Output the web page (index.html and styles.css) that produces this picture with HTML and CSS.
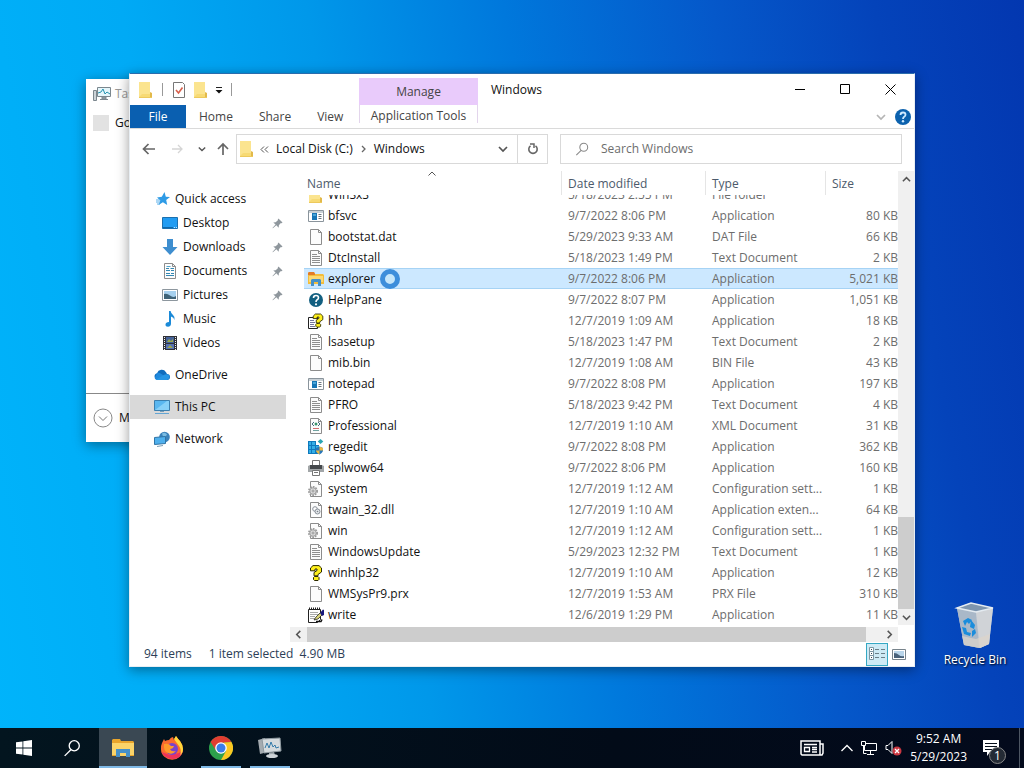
FILE: index.html
```html
<!DOCTYPE html>
<html lang="en">
<head>
    <meta charset="UTF-8">
    <meta name="viewport" content="width=device-width, initial-scale=1.0">
    <title>Windows</title>
    <link rel="stylesheet" href="styles.css">
</head>
<body>
    <!-- icon sprite -->
    <svg class="sprite" aria-hidden="true">
        <symbol id="i-folder" viewBox="0 0 16 16">
            <path d="M1 0h11v11h2v5H1z" fill="#f7da74"/>
            <path d="M1 0h11v12H4l-3 3z" fill="#fbe48f"/>
            <path d="M12 10l2 1v5h-2z" fill="#e2b94a"/>
            <path d="M1 15h13v1H1z" fill="#edc95c"/>
        </symbol>
        <symbol id="i-props" viewBox="0 0 16 16">
            <path d="M2.500.5h9l2 2v13h-11z" fill="#fff" stroke="#777"/>
            <path d="M5 8l2.500 3L11.500 5.500" fill="none" stroke="#d8604c" stroke-width="1.600"/>
        </symbol>
        <symbol id="i-page" viewBox="0 0 16 16">
            <path d="M2.500.5h8l3 3v12h-11z" fill="#fcfcfc" stroke="#8c8c8c"/>
            <path d="M10.500.5v3h3" fill="none" stroke="#8c8c8c"/>
        </symbol>
        <symbol id="i-text" viewBox="0 0 16 16">
            <use href="#i-page"/>
            <path d="M4 4.500h5M4 6.500h8M4 8.500h8M4 10.500h8M4 12.500h8" stroke="#8f8f8f"/>
        </symbol>
        <symbol id="i-app" viewBox="0 0 16 16">
            <path d="M.5 2.500h15v11H.5z" fill="#fff" stroke="#8a949c"/>
            <path d="M1 3h14v2H1z" fill="#c9d1d6"/>
            <path d="M4 5h5v7H4z" fill="#1775b5"/>
            <path d="M5 6h3v2H5z" fill="#4aa5d8"/>
            <path d="M10.500 6.500h3M10.500 8.500h3M10.500 10.500h3" stroke="#6b7780"/>
        </symbol>
        <symbol id="i-explorer" viewBox="0 0 16 16">
            <path d="M0 2l1-1h5l1 2h8l1 1v9H0z" fill="#f3bd3c"/>
            <path d="M0 2l1-1h5l1 2v1H0z" fill="#e27b28"/>
            <path d="M1 5h14v6H1z" fill="#fbd974"/>
            <path d="M3 15V9l1-1h8l1 1v6h-3v-4H6v4z" fill="#4390c8"/>
        </symbol>
        <symbol id="i-help" viewBox="0 0 16 16">
            <circle cx="8" cy="8" r="7" fill="#125f80"/>
            <path d="M5.500 6q0-2.500 2.500-2.500t2.500 2.200q0 1.300-1.300 2Q8 8.500 8 10" fill="none" stroke="#fff" stroke-width="1.600"/>
            <circle cx="8" cy="12.300" r="1.100" fill="#fff"/>
        </symbol>
        <symbol id="i-question" viewBox="0 0 16 16">
            <path d="M2.500 5.800V3L5 .6h6L13.500 3v4L10 9.500v1.300H6V7.500L9 5.500V4H7v1.800z" fill="#fff01c" stroke="#2b2900"/>
            <path d="M6.500 11.500h3.500l1 1v2l-1 1H6.500l-1-1v-2z" fill="#fff01c" stroke="#2b2900"/>
        </symbol>
        <symbol id="i-hh" viewBox="0 0 16 16">
            <path d="M.5 4.500h9v11h-9z" fill="#fff" stroke="#222"/>
            <path d="M2 7.500h4M2 9.500h5M2 11.500h4M2 13.500h5" stroke="#75759a"/>
            <use href="#i-question" x="3" y="0" width="14" height="15"/>
        </symbol>
        <symbol id="i-xml" viewBox="0 0 16 16">
            <use href="#i-page"/>
            <path d="M6 4L4 6l2 2M10 4l2 2-2 2" fill="none" stroke="#426b7c"/>
            <circle cx="8" cy="6" r="1.500" fill="#3a966f"/>
            <path d="M5 10.500h6" stroke="#d17070"/>
            <path d="M5 12.500h6" stroke="#71a3a1"/>
        </symbol>
        <symbol id="i-regedit" viewBox="0 0 16 16">
            <path d="M0 2h11v13H0z" fill="#0e79bd"/>
            <path d="M1 3h2v3H1zM4 3h3v3H4zM1 7h2v3H1zM4 7h3v3H4zM8 7h3v3H8zM1 11h2v3H1zM4 11h3v3H4z" fill="#33aee6"/>
            <path d="M8 2h3v4H8z" fill="#fff"/>
            <path d="M12.500 0l2.800 2.500-2.800 2.500-2.800-2.500z" fill="#2aa5b5"/>
            <path d="M8 9l3.500-1.500L15 9v3q-1 2.500-3.500 3.500Q9 14.500 8 12z" fill="#2876b8"/>
            <path d="M11.500 7.500L15 9v2.500h-3.500zM8 11.500h3.500v4Q9 14.500 8 12z" fill="#e8b843"/>
        </symbol>
        <symbol id="i-printer" viewBox="0 0 16 16">
            <path d="M4.500.5h7v5h-7z" fill="#fff" stroke="#777"/>
            <path d="M0 6l2-1h12l2 1v6H0z" fill="#a2a6a8"/>
            <path d="M2 5h12v4H2z" fill="#45494c"/>
            <path d="M4.500 10.500h7v5h-7z" fill="#fff" stroke="#777"/>
            <path d="M6 12.500h4" stroke="#777"/>
        </symbol>
        <symbol id="i-gear" viewBox="0 0 16 16">
            <use href="#i-page"/>
            <circle cx="5" cy="10" r="4" fill="#eee" stroke="#999" stroke-width="2" stroke-dasharray="1.600 1"/>
            <circle cx="5" cy="10" r="3.200" fill="#dcdcdc" stroke="#a2a2a2"/>
            <circle cx="5" cy="10" r="1" fill="#fff" stroke="#929292"/>
        </symbol>
        <symbol id="i-dll" viewBox="0 0 16 16">
            <use href="#i-page"/>
            <circle cx="7" cy="7" r="2.300" fill="#fff" stroke="#899099"/>
            <circle cx="9.500" cy="9.500" r="2.500" fill="#e4e7ea" stroke="#899099"/>
            <circle cx="9.500" cy="9.500" r=".8" fill="#7c848c"/>
        </symbol>
        <symbol id="i-write" viewBox="0 0 16 16">
            <path d="M.5 2.500h12v10l-3 3h-9z" fill="#fff" stroke="#222"/>
            <path d="M1 1.500h12" stroke="#222" stroke-width="2" stroke-dasharray="1 1"/>
            <path d="M2 5.500h8M2 7.500h8M2 9.500h5M2 11.500h5" stroke="#aaa"/>
            <path d="M6 13l2-3 5-5 2 2-5 5z" fill="#d9d37a" stroke="#111" stroke-width=".7"/>
            <path d="M12 6l3-3.500 1 .5v5l-2 1z" fill="#19197c"/>
            <path d="M8 14.500h5l1-2" fill="none" stroke="#111" stroke-width="1.500"/>
        </symbol>
        <symbol id="i-star" viewBox="0 0 16 16">
            <path d="M10.500 1l1.300 4.700L16 6l-3.800 3 1 5-4.300-2.800L4.500 14l1.800-4.600L3 6.500l4.800-.7z" fill="#2e9be6"/>
            <path d="M2 9h4M2 11h4M3 13h3" stroke="#5bb0ea"/>
        </symbol>
        <symbol id="i-desktop" viewBox="0 0 16 16">
            <path d="M.5 2.500h15v11H.5z" fill="#219cf2" stroke="#1b70af"/>
            <path d="M1 12.500h10" stroke="#0f67a8"/>
            <path d="M12 12.500h3" stroke="#bfe4ff" stroke-dasharray="1 1"/>
        </symbol>
        <symbol id="i-down" viewBox="0 0 16 16">
            <path d="M5 0h6v8h4.500L8 16 .5 8H5z" fill="#3e8ecf"/>
        </symbol>
        <symbol id="i-docs" viewBox="0 0 16 16">
            <use href="#i-page"/>
            <path d="M4 5.500h3M8.500 5.500H12M4 7.500h4M9 7.500h3M4 10.500h4M9 10.500h3M4 12.500h8" stroke="#3387b2"/>
            <path d="M4.500 3.500h4" stroke="#52a3c9"/>
        </symbol>
        <symbol id="i-pics" viewBox="0 0 16 16">
            <path d="M.5 2.500h15v11H.5z" fill="#fff" stroke="#8d979e"/>
            <path d="M2 4h12v8H2z" fill="#a6d0ee"/>
            <path d="M2 7q3-1 6 1.500t6 .5v3H2z" fill="#3f6378"/>
        </symbol>
        <symbol id="i-music" viewBox="0 0 16 16">
            <path d="M7 0h1.600q.4 2.500 2.400 4t1.500 5q-.7-3-3.500-3.500V13q-.4 2.700-3 2.700T3.500 13.500 7 11z" fill="#1b8ad8"/>
        </symbol>
        <symbol id="i-video" viewBox="0 0 16 16">
            <path d="M1 1h14v14H1z" fill="#303238"/>
            <path d="M2.500 2v13M13.500 2v13" stroke="#f2f2f2" stroke-dasharray="1 1"/>
            <path d="M4 2h8v6H4z" fill="#456298"/>
            <path d="M4 9h8v5H4z" fill="#5571b4"/>
            <path d="M5 7l2-3 2 2 2-2v3zM5 13l3-3 3 3z" fill="#9aa84c"/>
        </symbol>
        <symbol id="i-cloud" viewBox="0 0 16 16">
            <path d="M3.500 13A3.500 3.500 0 0 1 3 6.200a5 5 0 0 1 9-1L13 7a3 3 0 0 1 0 6z" fill="#0f6cbd"/>
            <path d="M3 6.200q2-1 4 .5L13 10.500V13H3.500Q1 12.500.6 11z" fill="#1f88dc"/>
            <path d="M2 12.500L9 8.500q3-2 5-1a3 3 0 0 1-1 5.500H3.500z" fill="#2595e4"/>
        </symbol>
        <symbol id="i-pc" viewBox="0 0 16 16">
            <path d="M.5 1.500h15v10H.5z" fill="#5ab7f0" stroke="#3c7fae"/>
            <path d="M1 11L13 2h2v9z" fill="#87d0f8"/>
            <path d="M6 12h4v1H6z" fill="#779db6"/>
            <path d="M1 14.500h14" stroke="#64a5d3"/>
        </symbol>
        <symbol id="i-net" viewBox="0 0 16 16">
            <circle cx="10.500" cy="6" r="5.300" fill="#3b82ba"/>
            <path d="M8 2.500q3-2 5 1l-2 3-2-1z" fill="#7bbce2"/>
            <path d="M.5 6.500l11-1v7l-11 1z" fill="#4fb0ed" stroke="#2f74a6"/>
            <path d="M3 15.500l6-1" stroke="#7b9db2"/>
        </symbol>
        <symbol id="i-pin" viewBox="0 0 12 12">
            <path d="M7 .5L11.500 5l-1.200.6-1 .1L7.500 8l-.2 2.500L4.700 8 1 11.300l-.5-.5L3.900 7.200 1.400 4.800l2.500-.2 2.300-1.800.1-1z" fill="#8f979d"/>
        </symbol>
        <symbol id="i-taskmgr" viewBox="0 0 18 16">
            <path d="M.5 4.500h3v10h-3z" fill="#ccd3d7" stroke="#7b878e"/>
            <path d="M4.500 1.500h13v9h-13z" fill="#e5f6fb" stroke="#7b878e"/>
            <path d="M5 7l3-1 2-3 2 5 2-2 3 2" fill="none" stroke="#2593b0"/>
            <path d="M9 11h4v2H9zM7 13.500h8" stroke="#7b878e" fill="#9aa5ab"/>
        </symbol>
        <symbol id="i-chev" viewBox="0 0 10 10">
            <path d="M1 3l4 4 4-4" fill="none" stroke="currentColor" stroke-width="1.700"/>
        </symbol>
        <symbol id="i-search" viewBox="0 0 16 16">
            <circle cx="10" cy="6" r="4.500" fill="none" stroke="currentColor" stroke-width="1.200"/>
            <path d="M7 9.500L1.500 15" stroke="currentColor" stroke-width="1.200"/>
        </symbol>
    </svg>

    <div class="desktop">
        <div class="recycle">
            <svg width="44" height="48" viewBox="0 0 44 48" aria-hidden="true">
                <path d="M4 8l7 37 16 3 9-4 4-36-23-5z" fill="#bac5d0"/>
                <path d="M4 8l19 4 3 36-15-3z" fill="#a9b8c8"/>
                <path d="M23 12l17-4-4 36-9 4z" fill="#d0d3d7"/>
                <path d="M4 8l14-5 22 5-17 4z" fill="#7d95ae" stroke="#e4ebf1" stroke-width="1.500"/>
                <path d="M9 36l14 3 14-5-1 10-9 4-16-3z" fill="#ddd4cb" opacity=".7"/>
                <path d="M10 21l5-3 4 2-3 4-2-2-2 4zM18 20l4 5-1 4-4-2zM9 27l4 1 1 4 4 1-1 3-6-2zM19 31l3-2 1 4-4 4z" fill="#1a8ddc"/>
            </svg>
            <span>Recycle Bin</span>
        </div>

        <section class="window taskmgr">
            <div class="taskmgr-title">
                <svg width="18" height="16"><use href="#i-taskmgr"/></svg>
                <span>Tas</span>
            </div>
            <div class="taskmgr-row"><span class="app-blank"></span>Go</div>
            <div class="taskmgr-foot">
                <svg width="20" height="20" viewBox="0 0 20 20"><circle cx="10" cy="10" r="9" fill="none" stroke="#888"/><path d="M6 8.500l4 4 4-4" fill="none" stroke="#777"/></svg>
                M
            </div>
        </section>

        <main class="window explorer">
            <header class="ribbon">
                <div class="ribbon-left">
                    <div class="quickbar">
                        <svg width="16" height="16"><use href="#i-folder"/></svg>
                        <span class="sep"></span>
                        <button aria-label="Properties"><svg width="16" height="16"><use href="#i-props"/></svg></button>
                        <button aria-label="New folder"><svg width="16" height="16"><use href="#i-folder"/></svg></button>
                        <button aria-label="Customize toolbar"><svg width="8" height="8" viewBox="0 0 8 8"><path d="M1 1.500h6" stroke="#222"/><path d="M.5 4h7L4 7.500z" fill="#111"/></svg></button>
                        <span class="sep"></span>
                    </div>
                    <div class="tabs">
                        <button class="file-tab">File</button>
                        <button>Home</button>
                        <button>Share</button>
                        <button>View</button>
                    </div>
                </div>
                <div class="ribbon-tools">
                    <div class="manage">Manage</div>
                    <button class="tools-tab">Application Tools</button>
                </div>
                <div class="ribbon-right">
                    <div class="caption">
                        <h1>Windows</h1>
                        <button aria-label="Minimize"><svg width="11" height="11" viewBox="0 0 11 11"><path d="M0 5.500h10" stroke="#000"/></svg></button>
                        <button aria-label="Maximize"><svg width="11" height="11" viewBox="0 0 11 11"><path d="M.5.5h9v9h-9z" fill="none" stroke="#000"/></svg></button>
                        <button aria-label="Close"><svg width="11" height="11" viewBox="0 0 11 11"><path d="M.5.5l10 10M10.500.5l-10 10" stroke="#000"/></svg></button>
                    </div>
                    <div class="help-row">
                        <button class="pale" aria-label="Expand the ribbon"><svg width="10" height="10"><use href="#i-chev"/></svg></button>
                        <button aria-label="Help"><svg width="16" height="16" viewBox="0 0 16 16"><circle cx="8" cy="8" r="8" fill="#0c62ae"/><path d="M5.500 6q0-2.500 2.500-2.500t2.500 2.200q0 1.300-1.300 2Q8 8.500 8 10" fill="none" stroke="#cfeaff" stroke-width="1.800"/><circle cx="8" cy="12.300" r="1.200" fill="#cfeaff"/></svg></button>
                    </div>
                </div>
            </header>

            <div class="navbar">
                <div class="history">
                    <button aria-label="Back"><svg width="14" height="14" viewBox="0 0 14 14"><path d="M13 7H2M6.500 2L1.500 7l5 5" fill="none" stroke="#666" stroke-width="1.700"/></svg></button>
                    <button aria-label="Forward"><svg width="14" height="14" viewBox="0 0 14 14"><path d="M2 7h10M8 3l4 4-4 4" fill="none" stroke="#d5d5d5" stroke-width="1.300"/></svg></button>
                    <button aria-label="Recent"><svg width="8" height="8"><use href="#i-chev"/></svg></button>
                    <button aria-label="Up"><svg width="14" height="14" viewBox="0 0 14 14"><path d="M7 13V2M2 7l5-5 5 5" fill="none" stroke="#666" stroke-width="1.700"/></svg></button>
                </div>
                <nav class="address" aria-label="Address">
                    <svg width="16" height="16"><use href="#i-folder"/></svg>
                    <svg class="crumb-sep" width="9" height="7" viewBox="0 0 9 7"><path d="M4 .5l-3 3 3 3M8 .5l-3 3 3 3" fill="none" stroke="#555"/></svg>
                    <a href="#">Local Disk (C:)</a>
                    <svg class="crumb-sep" width="5" height="8" viewBox="0 0 5 8"><path d="M1 1l3 3-3 3" fill="none" stroke="#666" stroke-width="1.300"/></svg>
                    <a href="#">Windows</a>
                    <button class="drop" aria-label="Previous locations"><svg width="10" height="10"><use href="#i-chev"/></svg></button>
                    <button class="refresh" aria-label="Refresh"><svg width="12" height="12" viewBox="0 0 12 12"><path d="M3.500 2.800a4.200 4.200 0 1 0 5 0" fill="none" stroke="#666" stroke-width="1.600"/><path d="M3 1h4v4" fill="none" stroke="#666" stroke-width="1.500"/></svg></button>
                </nav>
                <div class="search">
                    <label for="search" aria-label="Search Windows"><svg width="14" height="14"><use href="#i-search"/></svg></label>
                    <input type="text" id="search" placeholder="Search Windows">
                </div>
            </div>

            <div class="content">
                <nav class="sidebar">
                    <a class="top" href="#"><svg width="16" height="16"><use href="#i-star"/></svg>Quick access</a>
                    <a class="sub" href="#"><svg width="16" height="16"><use href="#i-desktop"/></svg>Desktop<svg class="pin" width="11" height="11"><use href="#i-pin"/></svg></a>
                    <a class="sub" href="#"><svg width="16" height="16"><use href="#i-down"/></svg>Downloads<svg class="pin" width="11" height="11"><use href="#i-pin"/></svg></a>
                    <a class="sub" href="#"><svg width="16" height="16"><use href="#i-docs"/></svg>Documents<svg class="pin" width="11" height="11"><use href="#i-pin"/></svg></a>
                    <a class="sub" href="#"><svg width="16" height="16"><use href="#i-pics"/></svg>Pictures<svg class="pin" width="11" height="11"><use href="#i-pin"/></svg></a>
                    <a class="sub" href="#"><svg width="16" height="16"><use href="#i-music"/></svg>Music</a>
                    <a class="sub" href="#"><svg width="16" height="16"><use href="#i-video"/></svg>Videos</a>
                    <a class="group" href="#"><svg width="16" height="16"><use href="#i-cloud"/></svg>OneDrive</a>
                    <a class="group current" href="#"><svg width="16" height="16"><use href="#i-pc"/></svg>This PC</a>
                    <a class="group" href="#"><svg width="16" height="16"><use href="#i-net"/></svg>Network</a>
                </nav>

                <div class="files">
                    <div class="file-list" id="file-list">
                        <table>
                            <thead>
                                <tr>
                                    <th class="name">Name<svg class="sort" width="8" height="5" viewBox="0 0 8 5"><path d="M.5 4.500L4 1l3.500 3.500" fill="none" stroke="#555"/></svg></th>
                                    <th class="date">Date modified</th>
                                    <th class="type">Type</th>
                                    <th>Size</th>
                                </tr>
                            </thead>
                            <tbody>
                                <tr><td><svg width="16" height="16"><use href="#i-folder"/></svg>WinSxS</td><td>5/18/2023 2:55 PM</td><td>File folder</td><td></td></tr>
                                <tr><td><svg width="16" height="16"><use href="#i-app"/></svg>bfsvc</td><td>9/7/2022 8:06 PM</td><td>Application</td><td>80 KB</td></tr>
                                <tr><td><svg width="16" height="16"><use href="#i-page"/></svg>bootstat.dat</td><td>5/29/2023 9:33 AM</td><td>DAT File</td><td>66 KB</td></tr>
                                <tr><td><svg width="16" height="16"><use href="#i-text"/></svg>DtcInstall</td><td>5/18/2023 1:49 PM</td><td>Text Document</td><td>2 KB</td></tr>
                                <tr class="selected"><td><svg width="16" height="16"><use href="#i-explorer"/></svg>explorer<svg class="busy" width="22" height="21" viewBox="0 0 22 21"><circle cx="11" cy="11" r="7.500" fill="#c5e6fa" stroke="#3d8edb" stroke-width="5"/></svg></td><td>9/7/2022 8:06 PM</td><td>Application</td><td>5,021 KB</td></tr>
                                <tr><td><svg width="16" height="16"><use href="#i-help"/></svg>HelpPane</td><td>9/7/2022 8:07 PM</td><td>Application</td><td>1,051 KB</td></tr>
                                <tr><td><svg width="16" height="16"><use href="#i-hh"/></svg>hh</td><td>12/7/2019 1:09 AM</td><td>Application</td><td>18 KB</td></tr>
                                <tr><td><svg width="16" height="16"><use href="#i-text"/></svg>lsasetup</td><td>5/18/2023 1:47 PM</td><td>Text Document</td><td>2 KB</td></tr>
                                <tr><td><svg width="16" height="16"><use href="#i-page"/></svg>mib.bin</td><td>12/7/2019 1:08 AM</td><td>BIN File</td><td>43 KB</td></tr>
                                <tr><td><svg width="16" height="16"><use href="#i-app"/></svg>notepad</td><td>9/7/2022 8:08 PM</td><td>Application</td><td>197 KB</td></tr>
                                <tr><td><svg width="16" height="16"><use href="#i-text"/></svg>PFRO</td><td>5/18/2023 9:42 PM</td><td>Text Document</td><td>4 KB</td></tr>
                                <tr><td><svg width="16" height="16"><use href="#i-xml"/></svg>Professional</td><td>12/7/2019 1:10 AM</td><td>XML Document</td><td>31 KB</td></tr>
                                <tr><td><svg width="16" height="16"><use href="#i-regedit"/></svg>regedit</td><td>9/7/2022 8:08 PM</td><td>Application</td><td>362 KB</td></tr>
                                <tr><td><svg width="16" height="16"><use href="#i-printer"/></svg>splwow64</td><td>9/7/2022 8:06 PM</td><td>Application</td><td>160 KB</td></tr>
                                <tr><td><svg width="16" height="16"><use href="#i-gear"/></svg>system</td><td>12/7/2019 1:12 AM</td><td>Configuration sett...</td><td>1 KB</td></tr>
                                <tr><td><svg width="16" height="16"><use href="#i-dll"/></svg>twain_32.dll</td><td>12/7/2019 1:10 AM</td><td>Application exten...</td><td>64 KB</td></tr>
                                <tr><td><svg width="16" height="16"><use href="#i-gear"/></svg>win</td><td>12/7/2019 1:12 AM</td><td>Configuration sett...</td><td>1 KB</td></tr>
                                <tr><td><svg width="16" height="16"><use href="#i-text"/></svg>WindowsUpdate</td><td>5/29/2023 12:32 PM</td><td>Text Document</td><td>1 KB</td></tr>
                                <tr><td><svg width="16" height="16"><use href="#i-question"/></svg>winhlp32</td><td>12/7/2019 1:10 AM</td><td>Application</td><td>12 KB</td></tr>
                                <tr><td><svg width="16" height="16"><use href="#i-page"/></svg>WMSysPr9.prx</td><td>12/7/2019 1:53 AM</td><td>PRX File</td><td>310 KB</td></tr>
                                <tr><td><svg width="16" height="16"><use href="#i-write"/></svg>write</td><td>12/6/2019 1:29 PM</td><td>Application</td><td>11 KB</td></tr>
                            </tbody>
                        </table>
                    </div>
                    <div class="vscroll">
                        <button class="up" aria-label="Scroll up"><svg width="9" height="9"><use href="#i-chev"/></svg></button>
                        <div class="vthumb"></div>
                        <button aria-label="Scroll down"><svg width="9" height="9"><use href="#i-chev"/></svg></button>
                    </div>
                    <div class="hscroll">
                        <button class="left" aria-label="Scroll left"><svg width="9" height="9"><use href="#i-chev"/></svg></button>
                        <div class="hthumb"></div>
                        <button class="right" aria-label="Scroll right"><svg width="9" height="9"><use href="#i-chev"/></svg></button>
                    </div>
                </div>
            </div>

            <footer class="statusbar">
                <span class="count">94 items</span>
                <span>1 item selected&nbsp; 4.90 MB</span>
                <button class="view active" aria-label="Details"><svg width="16" height="14" viewBox="0 0 16 14"><path d="M.5.5h4v4h-4zM.5 4.500h4v4h-4zM.5 8.500h4v4h-4z" fill="#fff" stroke="#7c97a3"/><path d="M2 2.500h1M2 6.500h1M2 10.500h1" stroke="#345"/><path d="M6 2.500h4M12 2.500h4M6 6.500h4M12 6.500h4M6 10.500h4M12 10.500h4" stroke="#6b7f88"/></svg></button>
                <button class="view" aria-label="Large icons"><svg width="14" height="11" viewBox="0 0 14 11"><path d="M.5.5h13v10H.5z" fill="#fff" stroke="#77838b"/><path d="M2 2h10v7H2z" fill="#b9d5ea"/><path d="M2 4q3 0 5 2t5 1v2H2z" fill="#49627a"/></svg></button>
            </footer>
        </main>
    </div>

    <footer class="taskbar">
        <button class="task" aria-label="Start"><svg width="16" height="16" viewBox="0 0 16 16"><path d="M0 2.300l6.500-.9v6.100H0zM7.300 1.300L16 0v7.500H7.300zM0 8.400h6.500v6.200L0 13.700zM7.300 8.400H16V16l-8.700-1.200z" fill="#fff"/></svg></button>
        <button class="task" aria-label="Search"><svg class="white" width="18" height="18"><use href="#i-search"/></svg></button>
        <div class="apps">
            <button class="task open focused" aria-label="File Explorer">
                <svg width="22" height="20" viewBox="0 0 22 20"><path d="M0 2l1-1h7l1 2h12l1 1v13H0z" fill="#e9a52c"/><path d="M0 5h22v13H0z" fill="#fbd469"/><path d="M4 19v-8h14v8h-4v-4H8v4z" fill="#4590c9"/><path d="M0 17h4v1H0zM18 17h4v1h-4z" fill="#e9a52c"/></svg>
            </button>
            <button class="task" aria-label="Firefox">
                <svg width="24" height="24" viewBox="0 0 24 24"><path d="M2 7l2-4 1 2q2-1 4-1 2-3 4-3l1 3 2-4q2 3 4 5 3 4 3 8a11 10.500 0 0 1-22 .5Q.5 10 2 7z" fill="#fb6b2e"/><path d="M1.500 16q4 7.500 12 7T23 14l-4 3-9 2z" fill="#ee335b"/><path d="M14 3l2-3q2 3 4 5 3 4 3 8t-3 6q2-5-1-9t-5-7z" fill="#ffd83a"/><circle cx="12" cy="13" r="6" fill="#7a43cc"/><path d="M4 8q5-1 7 2h3q-1 3-4 3 1 3 6 2-3 4-8 2T4 8z" fill="#ff9a2a"/></svg>
            </button>
            <button class="task open" aria-label="Google Chrome">
                <svg width="24" height="24" viewBox="0 0 24 24"><circle cx="12" cy="12" r="12" fill="#2da04c"/><path d="M1.600 6A12 12 0 0 1 22.400 6L12 7l-5 7.500z" fill="#e13d31"/><path d="M22.400 6A12 12 0 0 1 12 24l5-9-2-8.500z" fill="#fbc722"/><circle cx="12" cy="12" r="5.800" fill="#fff"/><circle cx="12" cy="12" r="4.500" fill="#3b7de9"/></svg>
            </button>
            <button class="task open" aria-label="Task Manager">
                <svg width="24" height="22" viewBox="0 0 24 22"><path d="M0 3l7-2 3 14-8 2z" fill="#a4abb0"/><path d="M4 2l18-1 1 13-17 2z" fill="#d5dbde" stroke="#8e999f"/><path d="M7 11l2-5 2 5 2-6 2 5 2-2 1 3 3-1" fill="none" stroke="#347baa"/><path d="M11 16l5-1 1 3-6 1z" fill="#9ea7ac"/><ellipse cx="14" cy="19" rx="6" ry="2" fill="#ced4d8"/></svg>
            </button>
        </div>
        <div class="tray">
            <svg class="news" width="24" height="16" viewBox="0 0 24 16"><path d="M1 1h19v14H2l-1-1zM20 4h3v9l-1 2h-2" fill="none" stroke="#fff" stroke-width="1.500"/><path d="M4 4.500h13M12 7.500h5M12 9.500h5M12 12h5" stroke="#fff" stroke-width="1.300"/><path d="M4.500 7.500h5v4h-5z" fill="none" stroke="#fff" stroke-width="1.300"/></svg>
            <svg width="12" height="8" viewBox="0 0 12 8"><path d="M.5 7L6 1.500 11.500 7" fill="none" stroke="#fff" stroke-width="1.300"/></svg>
            <svg width="16" height="14" viewBox="0 0 16 14"><path d="M5 2.500h10.500v7H3.500V5M9.500 10v3M6 13.500h7M.5.5h4v4h-4zM2.500 5v7.500h3" fill="none" stroke="#fff"/></svg>
            <svg width="17" height="16" viewBox="0 0 17 16"><path d="M1 5.500h2l4-4v12l-4-4H1z" fill="none" stroke="#fff"/><circle cx="12" cy="11" r="4.500" fill="#cb3741"/><path d="M10 9l4 4M14 9l-4 4" stroke="#fff" stroke-width="1.300"/></svg>
            <div class="clock"><span>9:52 AM</span><span>5/29/2023</span></div>
            <div class="notify">
                <svg width="16" height="16" viewBox="0 0 16 16"><path d="M0 0h16v12H7l-3 4v-4H0z" fill="#fff"/><path d="M2 3.500h12M2 6.500h12M2 9.500h7" stroke="#07101c"/></svg>
                <span class="badge">1</span>
            </div>
        </div>
    </footer>

    <script>
        // the list opens at its last row
        const fileList = document.getElementById('file-list');
        fileList.scrollTop = fileList.scrollHeight;
    </script>
</body>
</html>
```
FILE: styles.css
```css
* {
    box-sizing: border-box;
}
body {
    margin: 0;
    height: 100vh;
    display: flex;
    flex-direction: column;
    overflow: hidden;
    font-family: "Open Sans", "Noto Sans", sans-serif;
    font-size: 12px;
    line-height: 16px;
    color: #111;
    background: linear-gradient(80deg, #00b4fb 0%, #00aaf5 22%, #0098ea 38%, #0078dc 55%, #0558ca 73%, #0443ba 87%, #0337b0 100%);
}
button {
    display: flex;
    align-items: center;
    justify-content: center;
    padding: 0;
    border: none;
    background: none;
    font: inherit;
    color: #555;
}
a {
    color: inherit;
    text-decoration: none;
}
svg {
    flex: none;
}
.sprite {
    position: absolute;
    width: 0;
    height: 0;
}
.desktop {
    flex: 1;
    position: relative;
}
.window {
    position: absolute;
    background: #fff;
    display: flex;
    flex-direction: column;
    box-shadow: 0 3px 12px rgba(0, 0, 0, 0.4);
}

/* recycle bin */
.recycle {
    position: absolute;
    right: 12px;
    bottom: 60px;
    width: 74px;
    display: flex;
    flex-direction: column;
    align-items: center;
    gap: 4px;
    color: #fff;
    white-space: nowrap;
    text-shadow: 1px 1px 2px #000;
}

/* task manager */
.taskmgr {
    left: 86px;
    top: 79px;
    bottom: 286px;
    width: 40%;
    overflow: hidden;
}
.taskmgr-title {
    height: 30px;
    padding-left: 7px;
    display: flex;
    align-items: center;
    gap: 4px;
    color: #999;
}
.taskmgr-row {
    flex: 1;
    padding: 6px 7px;
    display: flex;
    align-items: flex-start;
    gap: 6px;
}
.app-blank {
    width: 16px;
    height: 16px;
    background: #e2e2e2;
}
.taskmgr-foot {
    height: 49px;
    padding-left: 7px;
    display: flex;
    align-items: center;
    gap: 6px;
    border-top: 1px solid #888;
}

/* explorer */
.explorer {
    left: 129px;
    right: 109px;
    top: 73px;
    bottom: 61px;
    border: 1px solid #e8eef3;
    border-top-color: #2a6cad;
}
.ribbon {
    display: flex;
    height: 55px;
    border-bottom: 1px solid #dadada;
    color: #444;
}
.ribbon-left {
    width: 229px;
}
.quickbar {
    height: 31px;
    padding-left: 8px;
    display: flex;
    align-items: center;
    gap: 6px;
}
.sep {
    width: 1px;
    height: 13px;
    margin: 0 2px;
    background: #999;
}
.tabs {
    display: flex;
    height: 23px;
}
.tabs button {
    padding: 0 13px;
}
.tabs .file-tab {
    flex: none;
    width: 56px;
    background: #0a5fb0;
    color: #fff;
}
.ribbon-tools {
    width: 119px;
    padding-top: 4px;
}
.manage {
    height: 27px;
    display: flex;
    align-items: center;
    justify-content: center;
    background: #e9cbfb;
}
.ribbon button {
    color: #444;
}
.ribbon .tools-tab {
    width: 100%;
    height: 18px;
    padding-top: 4px;
    border: solid #e3d5ec;
    border-width: 0 1px;
}
.ribbon .file-tab {
    color: #fff;
}
.ribbon .pale {
    color: #b5b5b5;
}
.ribbon-right {
    flex: 1;
}
.caption {
    display: flex;
    height: 31px;
    padding-right: 1px;
}
.caption h1 {
    flex: 1;
    margin: 0;
    padding-left: 13px;
    font-size: 12px;
    font-weight: normal;
    line-height: 32px;
    color: #111;
}
.caption button {
    width: 45px;
}
.help-row {
    height: 23px;
    padding-right: 3px;
    display: flex;
    justify-content: flex-end;
    align-items: center;
    gap: 9px;
}
.navbar {
    display: flex;
    padding: 5px 12px 0 0;
}
.history {
    width: 106px;
    padding-left: 12px;
    display: flex;
    align-items: center;
    gap: 14px;
}
.history button:nth-child(3) {
    margin-right: -4px;
}
.address {
    flex: 1 1 312px;
    height: 30px;
    display: flex;
    align-items: center;
    border: 1px solid #d9d9d9;
    padding-left: 2px;
}
.crumb-sep {
    margin: 0 7px 0 5px;
}
a + .crumb-sep {
    margin: 0 8px;
}
.drop {
    width: 28px;
    height: 28px;
    margin-left: auto;
}
.refresh {
    width: 30px;
    height: 28px;
    border-left: 1px solid #d9d9d9;
}
.search {
    flex: 1 1 342px;
    height: 30px;
    margin-left: 12px;
    padding-left: 14px;
    display: flex;
    align-items: center;
    gap: 12px;
    border: 1px solid #d9d9d9;
    color: #888;
}
.search label {
    display: flex;
}
.search input {
    flex: 1;
    min-width: 0;
    padding: 0;
    border: none;
    outline: none;
    font: inherit;
}
.search input::placeholder {
    color: #6d6d6d;
}
.content {
    flex: 1;
    min-height: 0;
    display: flex;
    padding-top: 7px;
}
.sidebar {
    width: 156px;
    padding-top: 16px;
}
.sidebar a {
    height: 24px;
    padding-left: 24px;
    display: flex;
    align-items: center;
    gap: 5px;
}
.sidebar .sub {
    padding-left: 32px;
}
.sidebar .group {
    margin-top: 8px;
}
.sidebar .current {
    background: #d9d9d9;
}
.pin {
    margin-left: auto;
    margin-right: 3px;
}
.files {
    flex: 1;
    min-width: 0;
    padding-left: 4px;
    display: grid;
    grid-template-columns: 1fr 16px;
    grid-template-rows: 1fr 17px;
}
.file-list {
    overflow: hidden;
    padding-left: 14px;
}
table {
    width: 100%;
    table-layout: fixed;
    border-collapse: separate;
    border-spacing: 0;
    white-space: nowrap;
}
th {
    position: sticky;
    top: 0;
    z-index: 1;
    height: 24px;
    padding: 2px 0 0 6px;
    background: #fff;
    border-left: 1px solid #e5e5e5;
    font-weight: normal;
    text-align: left;
    color: #4c5a6b;
}
th.name {
    width: 257px;
    padding-left: 3px;
    border-left: none;
}
th.date {
    width: 144px;
}
th.type {
    width: 120px;
}
.sort {
    position: absolute;
    top: 0;
    left: 50%;
    margin-left: -5px;
}
td {
    height: 21px;
    padding: 0 0 0 7px;
    color: #6d6d6d;
}
td:first-child {
    display: flex;
    align-items: center;
    gap: 4px;
    padding-left: 4px;
    color: #111;
}
td:last-child {
    padding: 0;
    text-align: right;
}
.selected td {
    background: #cce8ff;
    box-shadow: inset 0 1px #a6d3f5, inset 0 -1px #a6d3f5;
}
.busy {
    overflow: visible;
}
.vscroll {
    display: flex;
    flex-direction: column;
    background: #f0f0f0;
}
.vscroll button {
    height: 16px;
}
.vthumb {
    height: 92px;
    margin-top: auto;
    background: #cdcdcd;
}
.hscroll {
    display: flex;
    height: 15px;
    margin-top: 2px;
    background: #f0f0f0;
}
.hscroll button {
    width: 17px;
}
.hthumb {
    width: 92%;
    background: #cdcdcd;
    margin-right: auto;
}
.up svg {
    transform: rotate(180deg);
}
.left svg {
    transform: rotate(90deg);
}
.right svg {
    transform: rotate(-90deg);
}
.statusbar {
    height: 24px;
    padding: 0 4px 0 14px;
    display: flex;
    align-items: center;
    color: #2c3e57;
}
.count {
    margin-right: 17px;
}
.view {
    width: 22px;
    height: 23px;
}
.view.active {
    margin-left: auto;
    background: #cdeaf5;
    border: 1px solid #35a8c4;
}

/* taskbar */
.taskbar {
    height: 40px;
    display: flex;
    background: linear-gradient(90deg, #03151f, #020b18 60%, #030a1c);
    color: #fff;
}
.task {
    width: 48px;
    border-bottom: 2px solid transparent;
    border-top: 2px solid transparent;
}
.apps {
    display: flex;
    gap: 1px;
    margin-left: 3px;
}
.open {
    background: linear-gradient(#7fb9e6, #7fb9e6) 50% 100% / 40px 2px no-repeat border-box;
}
.open.focused {
    background: #3a4853;
    border-bottom-color: #7fb9e6;
    border-top-color: #3a4853;
}
.white {
    color: #fff;
}
.tray {
    margin-left: auto;
    padding-right: 4px;
    display: flex;
    align-items: center;
    gap: 8px;
}
.news {
    margin-right: 9px;
}
.clock {
    display: flex;
    flex-direction: column;
    align-items: center;
    line-height: 18px;
}
.notify {
    position: relative;
    height: 40px;
    width: 45px;
    padding: 12px 0 0 8px;
    border-right: 1px solid #4d5663;
}
.badge {
    position: absolute;
    left: 14px;
    top: 19px;
    width: 17px;
    height: 17px;
    border: 1px solid #888;
    border-radius: 50%;
    background: #242b35;
    font-size: 12px;
    line-height: 15px;
    text-align: center;
}
```
